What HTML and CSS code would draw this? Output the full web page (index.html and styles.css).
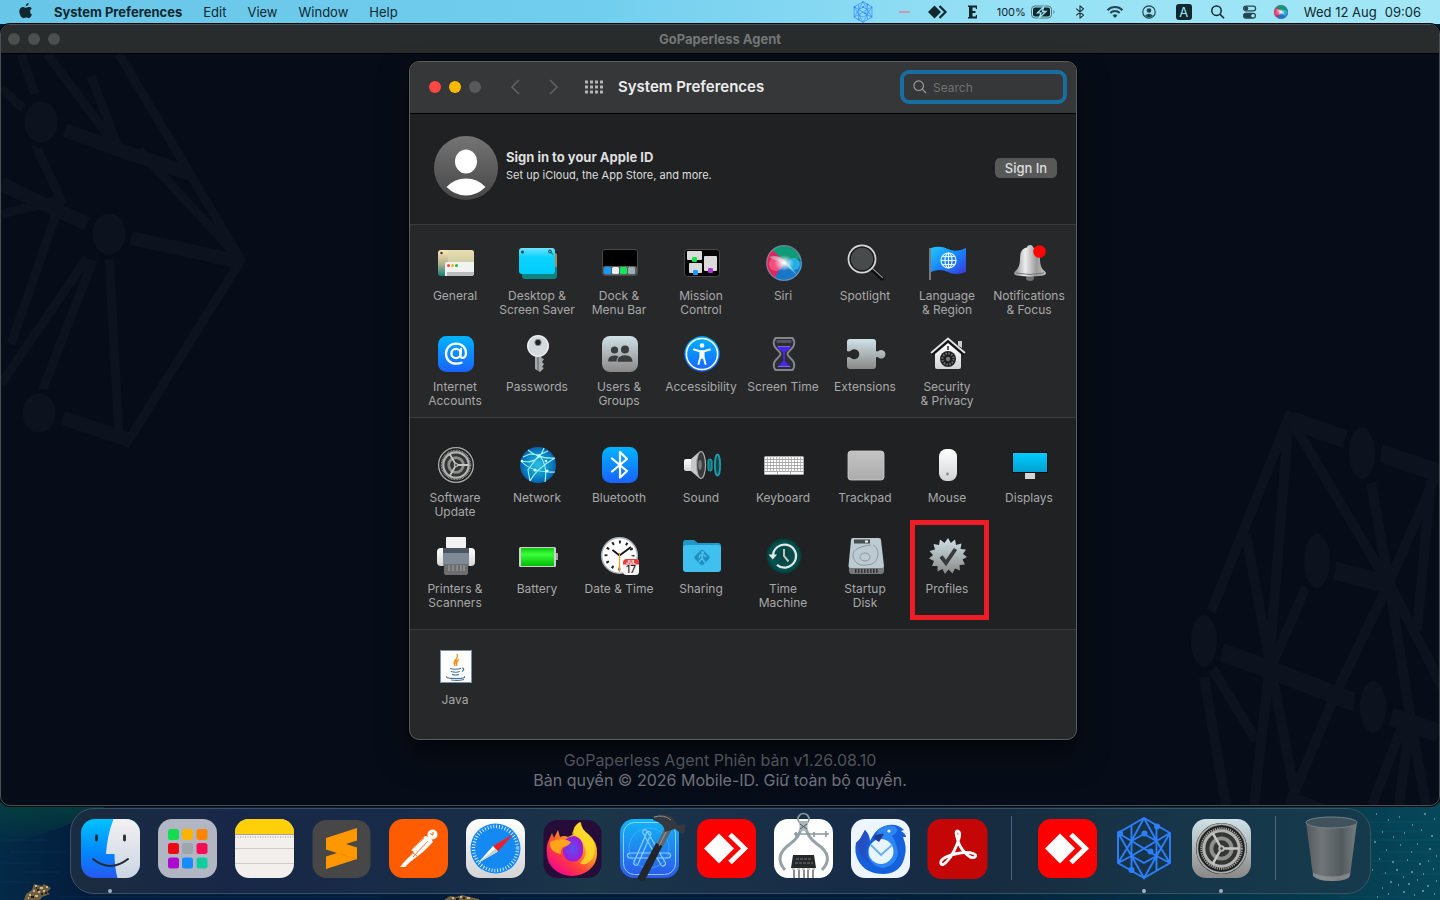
FILE: index.html
```html
<!DOCTYPE html>
<html lang="en">
<head>
<meta charset="utf-8">
<title>System Preferences</title>
<link rel="stylesheet" href="styles.css">
</head>
<body>
<svg class="defs" width="0" height="0" aria-hidden="true">
  <defs>
    <linearGradient id="gBlue" x1="0" y1="0" x2="0" y2="1"><stop offset="0" stop-color="#00b4ff"/><stop offset="1" stop-color="#1a62ff"/></linearGradient>
    <linearGradient id="gSilver" x1="0" y1="0" x2="0" y2="1"><stop offset="0" stop-color="#cfe2e8"/><stop offset="1" stop-color="#8a8886"/></linearGradient>
    <linearGradient id="gCyan" x1="0" y1="0" x2="0" y2="1"><stop offset="0" stop-color="#6fe3ff"/><stop offset=".35" stop-color="#0cd3ff"/><stop offset="1" stop-color="#00cdfc"/></linearGradient>
    <linearGradient id="gMetal" x1="0" y1="0" x2="1" y2="0"><stop offset="0" stop-color="#8c8c8c"/><stop offset=".35" stop-color="#eeeeee"/><stop offset=".7" stop-color="#9a9a9a"/><stop offset="1" stop-color="#c4c4c4"/></linearGradient>
    <linearGradient id="gWhite" x1="0" y1="0" x2="0" y2="1"><stop offset="0" stop-color="#ffffff"/><stop offset="1" stop-color="#d4d4d6"/></linearGradient>
    <linearGradient id="gAvatar" x1="0" y1="0" x2="0" y2="1"><stop offset="0" stop-color="#747474"/><stop offset="1" stop-color="#464646"/></linearGradient>
    <linearGradient id="gFlag" x1="0" y1="0" x2="1" y2="1"><stop offset="0" stop-color="#22c8ff"/><stop offset=".5" stop-color="#1686ff"/><stop offset="1" stop-color="#3a38d8"/></linearGradient>
    <linearGradient id="gSand" x1="0" y1="0" x2="0" y2="1"><stop offset="0" stop-color="#fbe9b4"/><stop offset=".5" stop-color="#b9b48e"/><stop offset="1" stop-color="#177f7c"/></linearGradient>
    <linearGradient id="gGreen" x1="0" y1="0" x2="0" y2="1"><stop offset="0" stop-color="#0fc712"/><stop offset=".35" stop-color="#3dff3a"/><stop offset="1" stop-color="#00bd06"/></linearGradient>
    <linearGradient id="gScreen" x1="0" y1="0" x2="0" y2="1"><stop offset="0" stop-color="#00ccff"/><stop offset="1" stop-color="#00a2d0"/></linearGradient>
    <linearGradient id="gPad" x1="0" y1="0" x2="0" y2="1"><stop offset="0" stop-color="#c3c3c4"/><stop offset="1" stop-color="#acacad"/></linearGradient>
    <linearGradient id="gFire" x1="1" y1="0" x2=".2" y2="1"><stop offset="0" stop-color="#fff236"/><stop offset=".4" stop-color="#ffa41c"/><stop offset=".7" stop-color="#ff3b3c"/><stop offset="1" stop-color="#f2009a"/></linearGradient>
    <linearGradient id="gBin" x1="0" y1="0" x2="1" y2="0"><stop offset="0" stop-color="#565a5e"/><stop offset=".3" stop-color="#74787b"/><stop offset=".7" stop-color="#575d60"/><stop offset="1" stop-color="#7b8184"/></linearGradient>
    <radialGradient id="gNet"><stop offset="0" stop-color="#2bbfe0"/><stop offset=".7" stop-color="#0a86c4"/><stop offset="1" stop-color="#0a5fb0"/></radialGradient>
    <radialGradient id="gPurple"><stop offset="0" stop-color="#5a50f0"/><stop offset="1" stop-color="#a018d8"/></radialGradient>
    <radialGradient id="gTime"><stop offset="0" stop-color="#0a3f3e"/><stop offset=".75" stop-color="#065451"/><stop offset="1" stop-color="#043a3a"/></radialGradient>
    <radialGradient id="gGlow"><stop offset="0" stop-color="#fff"/><stop offset=".35" stop-color="#fff" stop-opacity=".65"/><stop offset="1" stop-color="#fff" stop-opacity="0"/></radialGradient>

    <symbol id="gear" viewBox="0 0 60 60">
      <circle cx="30" cy="30" r="29" fill="#1d1e1e"/>
      <circle cx="30" cy="30" r="27.500" fill="#4b4c4b" stroke="#a9adac" stroke-width="2"/>
      <circle cx="30" cy="30" r="24" fill="none" stroke="#1c1c1c" stroke-width="4"/>
      <circle cx="30" cy="30" r="23" fill="none" stroke="#a2a3a1" stroke-width="2.400" stroke-dasharray="1.400 1.100"/>
      <circle cx="30" cy="30" r="20" fill="#343535" stroke="#b2b4b2" stroke-width="3.400"/>
      <circle cx="30" cy="30" r="11.500" fill="none" stroke="#8d8f8d" stroke-width="4.400"/>
      <path d="M30 30H50M30 30L20 12.500M30 30L20 47.500" stroke="#c5c7c5" stroke-width="2.800"/>
      <circle cx="30" cy="30" r="3.600" fill="#b4b6b4"/><circle cx="30" cy="30" r="1.400" fill="#3a3a3a"/>
    </symbol>
    <symbol id="lattice" viewBox="0 0 56 64">
      <g fill="none" stroke="currentColor" stroke-width="1.900">
        <path d="M28 2L54 17V47L28 62L2 47V17Z"/>
        <path d="M15.500 10V54M40.500 10V54M28 2L15.500 25L2 47M28 2L40.500 25L54 47M2 17L15.500 40L28 62L40.500 40L54 17M15.500 25L28 18L40.500 25L15.500 40L28 47L40.500 40L15.500 25L2 17M40.500 25L54 17M2 47L15.500 40M54 47L40.500 40"/>
      </g>
      <g fill="currentColor"><circle cx="41" cy="10.500" r="3"/><circle cx="4" cy="17.500" r="3"/><circle cx="28.500" cy="17.500" r="3"/><circle cx="34.500" cy="35.500" r="3"/><circle cx="15.500" cy="54" r="3"/></g>
    </symbol>
    <symbol id="siri" viewBox="0 0 36 36">
      <circle cx="18" cy="18" r="18" fill="#2b3f6e"/>
      <path d="M6 5A18 18 0 0 1 35 15C28 12 22 20 17 17S10 10 6 5Z" fill="#0f9a78"/>
      <path d="M6 5A18 18 0 0 0 9 33C20 28 19 20 18 17S10 8 6 5Z" fill="#d8285f"/>
      <path d="M9 33A18 18 0 0 0 36 17C28 12 22 14 18 17S12 28 9 33Z" fill="#1878c8"/>
      <ellipse cx="10" cy="19" rx="7" ry="7" fill="#ff5f8c" opacity=".7"/>
      <ellipse cx="28" cy="19" rx="6" ry="6" fill="#28c8f0" opacity=".7"/>
      <path d="M3 12C14 8 22 16 31 30L18 19Z" fill="#bfe9e6" opacity=".5"/>
      <ellipse cx="18" cy="18" rx="10" ry="8" fill="url(#gGlow)"/>
      <circle cx="18" cy="18" r="17.300" fill="none" stroke="#a8b8c0" stroke-opacity=".5" stroke-width="1.200"/>
    </symbol>
    <symbol id="bt" viewBox="0 0 10 16"><path d="M1 4.500L9 11.500L5 15V1L9 4.500L1 11.500" fill="none" stroke="currentColor" stroke-width="1.200" stroke-linejoin="round" stroke-linecap="round"/></symbol>
    <symbol id="anydesk" viewBox="0 0 64 64">
      <rect x="3" y="3" width="59" height="59" rx="13" fill="#fe0000"/>
      <path d="M25 17.500L40 32.500L25 47.500L10 32.500Z" fill="#fff"/>
      <path d="M36 18.500L50.500 32.500L36 46.500" fill="none" stroke="#fff" stroke-width="5"/>
    </symbol>
  </defs>
</svg>

<svg class="wallpaper" viewBox="0 0 1440 100" preserveAspectRatio="xMidYMax slice" aria-hidden="true">
  <defs>
    <linearGradient id="sea" x1="0" y1="0" x2="1" y2="0"><stop offset="0" stop-color="#032a47"/><stop offset=".06" stop-color="#031c3c"/><stop offset=".6" stop-color="#041c38"/><stop offset=".9" stop-color="#05384c"/><stop offset="1" stop-color="#06485a"/></linearGradient>
    <linearGradient id="shore" x1="0" y1="0" x2="0" y2="1"><stop offset="0" stop-color="#04403f"/><stop offset="1" stop-color="#04403f" stop-opacity="0"/></linearGradient>
  </defs>
  <rect width="1440" height="100" fill="url(#sea)"/>
  <path d="M0 0H120L60 28L0 48Z" fill="url(#shore)"/>
  <g stroke="#0c6478" stroke-opacity=".35"><path d="M1360 22H1440M1372 31H1425M1366 40H1440M1378 52H1432M1370 61H1440M1380 74H1440M1340 97H1410"/></g>
  <g stroke="#0b3c63" stroke-opacity=".4"><path d="M0 40H50M10 52H66M0 63H40M20 72H60M0 82H30M60 97H380M500 98H900"/></g>
  <g fill="#6f6045"><path d="M24 100L26 94L32 90L34 84L42 86L44 84L51 88L47 92L50 94L42 97L40 100Z"/><path d="M444 100L450 96L456 97L462 95L470 97L479 99V100Z"/></g>
  <path d="M35 86h2M40 88h3M46 87h2M33 91h2M38 92h2M43 91h2M29 95h2M35 96h3M28 98h1M452 98h2M460 97h2M467 98h3" stroke="#d2b77c" stroke-width="2"/>
  <path d="M37 90h2M41 94h2M31 97h3M45 93h2M36 88h1M456 99h3M463 98h2" stroke="#1c1d1c" stroke-width="2"/>
  <path d="M1376 14h1M1388 20h1M1399 17h1M1412 25h1M1424 14h2M1434 19h1M1382 32h1M1374 42h2M1393 37h1M1404 33h1M1421 30h1M1431 36h2M1386 50h1M1400 45h1M1411 52h1M1417 44h1M1429 49h2M1436 56h1M1379 59h1M1392 62h2M1407 60h1M1419 64h2M1428 61h1M1372 70h1M1385 73h1M1396 70h2M1403 77h1M1411 72h2M1423 74h1M1433 69h1M1390 82h2M1382 88h1M1398 85h1M1408 84h2M1417 80h1M1427 86h2M1436 81h1M1388 94h1M1403 92h2M1414 95h1M1422 91h2M1434 94h1M1377 97h1" stroke="#9fcdd3" stroke-width="1"/>
</svg>

<header class="menubar">
  <nav class="menus" aria-label="Application menu">
    <a class="menu-apple" href="#" aria-label="Apple"><svg width="14" height="16" viewBox="0 0 14 16"><path d="M9.700 0C9.800 1.700 8.300 3.300 6.700 3.300C6.600 1.700 8 .2 9.700 0ZM12.900 11.500C12.200 13.200 11.100 15.200 9.800 15.200C8.900 15.200 8.500 14.600 7.300 14.600S5.600 15.200 4.700 15.200C2.600 15.200 .3 11.600 .3 8.500C.3 5.600 2.100 4 4 4C5.200 4 6.200 4.800 6.900 4.800C7.600 4.800 8.700 4 10.100 4C11.200 4 12.200 4.500 12.800 5.400C10.400 6.800 10.800 10.400 12.900 11.500Z" fill="#10272e"/></svg></a>
    <a class="menu-app" href="#">System Preferences</a>
    <a href="#">Edit</a>
    <a href="#">View</a>
    <a href="#">Window</a>
    <a href="#">Help</a>
  </nav>
  <div class="status">
    <svg class="status-lattice" width="20" height="22"><use href="#lattice"/></svg>
    <svg width="23" height="16" viewBox="0 0 23 16"><path d="M10 8H21" stroke="#e77f92" stroke-width="1.500"/></svg>
    <svg width="20" height="16" viewBox="0 0 20 16"><path d="M6.500 1.500L13 8L6.500 14.500L0 8Z" fill="#10272e"/><path d="M11.500 2L17.500 8L11.500 14" fill="none" stroke="#10272e" stroke-width="2.200"/></svg>
    <svg width="17" height="16" viewBox="0 0 17 16"><path d="M4 1.500H13V5H12L11.500 3.500H8.500V7H11.500V9H8.500V12.500H11.500L12 11H13V14.500H4V13H5V3H4Z" fill="#10272e"/></svg>
    <span class="battery"><span>100%</span><svg width="25" height="14" viewBox="0 0 25 14"><rect x=".5" y="1" width="20" height="12" rx="3.500" fill="none" stroke="#4c7680"/><rect x="2" y="2.500" width="17" height="9" rx="2" fill="#10272e"/><path d="M12.500 2L6.500 7.800H10L8.500 12.500L15 6.500H11.500Z" fill="#10272e" stroke="#a0e6f5" stroke-width="1.300"/><path d="M22.500 5Q24.500 7 22.500 9Z" fill="#4c7680"/></svg></span>
    <svg class="status-ink" width="16" height="14"><use href="#bt"/></svg>
    <svg width="22" height="14" viewBox="0 0 22 14" fill="none" stroke="#23464f" stroke-width="2"><path d="M3.500 5.200A10.600 10.600 0 0 1 18.500 5.200M6.300 8A6.600 6.600 0 0 1 15.700 8"/><path d="M11 13L8.600 10.500A3.300 3.300 0 0 1 13.400 10.500Z" fill="#23464f" stroke="none"/></svg>
    <svg width="16" height="14" viewBox="0 0 16 14"><circle cx="7" cy="7" r="6.200" fill="none" stroke="#23464f" stroke-width="1.200"/><circle cx="7" cy="5.500" r="2.300" fill="#23464f"/><path d="M3 10.800Q7 6.500 11 10.800Q7 14 3 10.800Z" fill="#23464f"/></svg>
    <span class="input-source">A</span>
    <svg width="16" height="14" viewBox="0 0 16 14" fill="none" stroke="#10272e" stroke-width="1.500"><circle cx="6.500" cy="5.700" r="4.700"/><path d="M10 9.200L14 13.300"/></svg>
    <svg width="16" height="14" viewBox="0 0 16 14"><rect x="1.600" y="1.100" width="12" height="4.800" rx="2.400" fill="none" stroke="#23464f" stroke-width="1.200"/><circle cx="4.200" cy="3.500" r="2" fill="#23464f"/><rect x="1" y="7.700" width="13" height="6" rx="3" fill="#23464f"/><circle cx="11" cy="10.700" r="1.800" fill="#9fe5f4"/></svg>
    <svg width="14" height="14"><use href="#siri"/></svg>
    <time class="clock"><span>Wed 12 Aug</span><span>09:06</span></time>
  </div>
</header>

<main class="agent">
  <header class="agent-title">
    <div class="lights lights-off"><span></span><span></span><span></span></div>
    <h1>GoPaperless Agent</h1>
  </header>
  <div class="agent-body">
    <svg class="net net-left" width="260" height="460" viewBox="0 0 260 460" aria-hidden="true">
      <g stroke="#0d131e" stroke-width="9" fill="none">
        <path d="M118 0L240 206L124 392M240 206L138 96M40 340L92 206M118 384L108 200M118 96L46 0M118 96L90 22M0 34L24 56M0 330L86 204M0 160L60 146L34 90M20 0L34 40M60 146L10 290"/>
        <path d="M64 76L118 96L190 120M130 184L240 208M62 364L128 386M0 130L86 170" stroke-width="14"/>
      </g>
      <g fill="#0d131e" stroke="#070d18" stroke-width="5"><ellipse cx="40" cy="68" rx="19" ry="23"/><ellipse cx="108" cy="180" rx="19" ry="23"/><ellipse cx="38" cy="359" rx="19" ry="22"/></g>
    </svg>
    <svg class="net net-right" width="250" height="400" viewBox="1190 405 250 400" aria-hidden="true">
      <g stroke="#0d131e" stroke-width="10" fill="none">
        <path d="M1292 412L1212 612M1289 430L1270 665M1295 425L1390 585M1247 535L1272 667L1297 800M1372 483L1390 583L1413 727L1427 805M1307 587L1272 667M1390 583L1337 693L1290 805M1205 677L1227 805M1213 668L1257 740M1270 673L1255 805M1432 480L1418 630M1390 583L1445 690M1403 727L1373 805M1440 468L1390 583M1410 727L1400 805"/>
        <path d="M1292 420L1348 440M1381 453L1440 473M1334 570L1390 585M1222 652L1272 670L1357 703M1392 717L1440 733M1290 800L1340 820" stroke-width="18"/>
      </g>
      <g fill="#0d131e" stroke="#070d18" stroke-width="6"><ellipse cx="1363" cy="453" rx="16" ry="29"/><ellipse cx="1318" cy="561" rx="16" ry="30"/><ellipse cx="1205" cy="641" rx="16" ry="29"/><ellipse cx="1374" cy="707" rx="16" ry="29"/></g>
    </svg>

    <section class="prefs" aria-label="System Preferences">
      <header class="toolbar">
        <div class="lights"><span class="light-close"></span><span class="light-min"></span><span></span></div>
        <div class="nav">
          <button type="button" aria-label="Back"><svg width="20" height="20" viewBox="0 0 20 20"><path d="M13 3L6 10L13 17"/></svg></button>
          <button type="button" aria-label="Forward"><svg width="20" height="20" viewBox="0 0 20 20"><path d="M6 3L13 10L6 17"/></svg></button>
        </div>
        <button class="show-all" type="button" aria-label="Show all"><svg width="20" height="14" viewBox="0 0 20 14"><path d="M1 2H20M1 7H20M1 12H20" stroke="#b4b5b6" stroke-width="3" stroke-dasharray="3 2"/></svg></button>
        <h2>System Preferences</h2>
        <label class="search">
          <svg width="14" height="14" viewBox="0 0 14 14" fill="none" stroke="#9c9d9e" stroke-width="1.200"><circle cx="5.700" cy="5.700" r="4.800"/><path d="M9.200 9.200L13 13"/></svg>
          <input type="text" placeholder="Search" aria-label="Search">
        </label>
      </header>

      <div class="account">
        <svg width="64" height="64" viewBox="0 0 64 64"><circle cx="32" cy="32" r="32" fill="url(#gAvatar)"/><ellipse cx="32" cy="25.500" rx="11" ry="12" fill="#fff"/><path d="M12.500 51Q20 42.500 32 42.500T51.500 51Q43 59.500 32 59.500T12.500 51Z" fill="#fff"/></svg>
        <div class="account-text"><h3>Sign in to your Apple ID</h3><p>Set up iCloud, the App Store, and more.</p></div>
        <button class="sign-in" type="button">Sign In</button>
      </div>

      <div class="group group-personal">
        <button class="pref" type="button"><svg width="40" height="40" viewBox="0 0 40 40"><rect x="2" y="7" width="36" height="26" rx="3" fill="url(#gSand)"/><path d="M12 7H35a3 3 0 0 1 3 3V21H12Z" fill="#dcd9ae" opacity=".7"/><path d="M9 21a2 2 0 0 1 2-2H38V30a3 3 0 0 1-3 3H9Z" fill="#f2f2f2"/><path d="M11 29H38v1a3 3 0 0 1-3 3H11Z" fill="#bdbdbd"/><circle cx="12.500" cy="22.500" r="1.500" fill="#ff4545"/><circle cx="16.500" cy="22.500" r="1.500" fill="#ffb400"/><circle cx="20.500" cy="22.500" r="1.500" fill="#12c23a"/><circle cx="5.500" cy="10" r="1.200" fill="#333"/></svg><span>General</span></button>
        <button class="pref" type="button"><svg width="40" height="40" viewBox="0 0 40 40"><rect x="4" y="10" width="35" height="26" rx="3" fill="#0b8580"/><path d="M37 10a2 2 0 0 1 2 2V24H37Z" fill="#a88a55"/><rect x="1" y="5" width="36" height="26" rx="3" fill="url(#gCyan)"/><ellipse cx="4.500" cy="9" rx="1.300" ry="1.600" fill="#10343c"/><circle cx="32" cy="8.500" r="1.400" fill="none" stroke="#10343c"/><path d="M33 9.500L35 11.500" stroke="#10343c"/></svg><span>Desktop &amp;<br>Screen Saver</span></button>
        <button class="pref" type="button"><svg width="40" height="40" viewBox="0 0 40 40"><rect x="2.500" y="6.500" width="35" height="26" rx="2.500" fill="#000" stroke="#4a4a4a"/><rect x="3" y="23" width="34" height="9" rx="2" fill="#5b5f61"/><rect x="4" y="24" width="7" height="7" rx="1.500" fill="#139dff"/><rect x="12" y="24" width="7" height="7" rx="1.500" fill="#ececec"/><rect x="20" y="24" width="7" height="7" rx="1.500" fill="#10e858"/><rect x="28" y="24" width="7" height="7" rx="1.500" fill="#9bb0b6"/></svg><span>Dock &amp;<br>Menu Bar</span></button>
        <button class="pref" type="button"><svg width="40" height="40" viewBox="0 0 40 40"><rect x="2.500" y="6.500" width="35" height="27" rx="3" fill="#050505" stroke="#4a4a4a"/><g fill="#dadada"><rect x="5" y="8" width="15" height="9" rx="1"/><rect x="22" y="13" width="13" height="15" rx="1"/><rect x="7" y="20" width="13" height="10" rx="1"/></g><rect x="10" y="14" width="5" height="5" rx="1.200" fill="#0ce84c"/><rect x="11" y="27" width="5" height="5" rx="1.200" fill="#199cff"/><rect x="26" y="25" width="5" height="5" rx="1.200" fill="#b03ad4"/></svg><span>Mission<br>Control</span></button>
        <button class="pref" type="button"><svg width="40" height="40" viewBox="0 0 40 40"><use href="#siri" x="2" y="2" width="36" height="36"/></svg><span>Siri</span></button>
        <button class="pref" type="button"><svg width="40" height="40" viewBox="0 0 40 40"><path d="M27 27L36 35.500" stroke="#0c0c0c" stroke-width="4" stroke-linecap="round"/><path d="M26.500 25.500L37 35" stroke="#8a8a8a" stroke-width="1.200"/><circle cx="16" cy="16" r="13.500" fill="#3a3d3e" stroke="#d6d6d6" stroke-width="1.800"/><circle cx="16" cy="16" r="11.800" fill="#474b4c" stroke="#191919" stroke-width="1.200"/></svg><span>Spotlight</span></button>
        <button class="pref" type="button"><svg width="40" height="40" viewBox="0 0 40 40"><path d="M2 5V37" stroke="#8e9090" stroke-width="1.600"/><path d="M3 5Q12 2 20 6T38 5V29Q28 33 20 29T3 29Z" fill="url(#gFlag)"/><g fill="none" stroke="#e9f6ff" stroke-width="1.200"><circle cx="20.500" cy="17.500" r="7.500"/><ellipse cx="20.500" cy="17.500" rx="3.500" ry="7.500"/><path d="M20.500 10V25M13 17.500H28M14.500 13.500H26.500M14.500 21.500H26.500"/></g></svg><span>Language<br>&amp; Region</span></button>
        <button class="pref" type="button"><svg width="40" height="40" viewBox="0 0 40 40"><ellipse cx="20" cy="35" rx="4" ry="3" fill="#6f7171"/><circle cx="20" cy="5" r="3" fill="#c9c9c9"/><path d="M20 4C12 4 10 9 10 16S8 26 4.500 29Q3 32 7 32.500Q20 34.500 33 32.500Q37 32 35.500 29C32 26 30 23 30 16S28 4 20 4Z" fill="url(#gMetal)"/><path d="M6 30Q20 33 34 30" fill="none" stroke="#777"/><circle cx="29.500" cy="8.500" r="6.300" fill="#fd0500"/></svg><span>Notifications<br>&amp; Focus</span></button>

        <button class="pref" type="button"><svg width="40" height="40" viewBox="0 0 40 40"><rect x="2" y="2" width="36" height="36" rx="8.500" fill="url(#gBlue)"/><g fill="none" stroke="#fff" stroke-width="2.300" stroke-linecap="round"><circle cx="20" cy="19.500" r="4.600"/><path d="M25 14.800L24.200 21.500C24 25 29.800 24.800 30 19.300C30.200 13.500 25.800 9.700 20.200 9.700C14.300 9.700 10 13.800 10 19.800C10 26 14.500 29.700 20.500 29.700Q23.300 29.700 25.500 28.800"/></g></svg><span>Internet<br>Accounts</span></button>
        <button class="pref" type="button"><svg width="40" height="40" viewBox="0 0 40 40"><path d="M17 20H23.500V24L26 25L24 28L26 30L24 33L26 34L22 38L17 35Z" fill="#a5aaac"/><path d="M20 21V37" stroke="#555b5e"/><circle cx="20" cy="12" r="11" fill="#d3d9dc"/><circle cx="20" cy="12" r="10.200" fill="none" stroke="#f3f3f3"/><circle cx="20" cy="8.500" r="3.200" fill="#1f2123" stroke="#8c9193"/></svg><span>Passwords</span></button>
        <button class="pref" type="button"><svg width="40" height="40" viewBox="0 0 40 40"><rect x="2" y="2" width="36" height="36" rx="8" fill="url(#gSilver)"/><g fill="#3b3c3d"><circle cx="14.500" cy="16" r="3.600"/><path d="M8 27.500Q8 21.500 14.500 21.500Q17 21.500 18.500 22.800Q16.500 24.500 16.500 27.500Z"/><circle cx="25" cy="15.500" r="4"/><path d="M17.500 27.800Q17.500 21.200 25 21.200T32.500 27.800Z"/></g></svg><span>Users &amp;<br>Groups</span></button>
        <button class="pref" type="button"><svg width="40" height="40" viewBox="0 0 40 40"><circle cx="20" cy="20" r="17.700" fill="url(#gBlue)"/><circle cx="20" cy="20" r="15.600" fill="none" stroke="#fff" stroke-width="1.500"/><circle cx="20" cy="11.500" r="2.300" fill="#fff"/><path d="M12 15.500L18 17.200H22L28 15.500M20 17V24M18.400 17.200V23L16.500 30M21.600 17.200V23L23.500 30" fill="none" stroke="#fff" stroke-width="1.900" stroke-linecap="round"/></svg><span>Accessibility</span></button>
        <button class="pref" type="button"><svg width="40" height="40" viewBox="0 0 40 40"><path d="M11.500 4H28.500Q31 7 30 11C29 15 23.500 17 23.500 20S29 25 30 29Q31 33 28.500 36H11.500Q9 33 10 29C11 25 16.500 23 16.500 20S11 15 10 11Q9 7 11.500 4Z" fill="#2c2c33" stroke="#85848e" stroke-width="2"/><path d="M12.500 6H27.500V9H12.500Z" fill="#54545e"/><path d="M13 12H27Q26 15 21 18.500V27L27 33H13L19 27V18.500Q14 15 13 12Z" fill="#4a28e0"/><path d="M14 12.500H26M14 32.500H26" stroke="#7a63f5"/></svg><span>Screen Time</span></button>
        <button class="pref" type="button"><svg width="40" height="40" viewBox="0 0 40 40"><path d="M4 5H27a3 3 0 0 1 3 3V17Q31.500 18 33 16.500A4.300 4.300 0 1 1 33 24Q31.500 22.500 30 23.500V32a3 3 0 0 1-3 3H4a3 3 0 0 1-3-3V23.500Q3 22.500 5 24A5 5 0 1 0 5 16.500Q3 18 1 17V8a3 3 0 0 1 3-3Z" fill="url(#gSilver)"/></svg><span>Extensions</span></button>
        <button class="pref" type="button"><svg width="40" height="40" viewBox="0 0 40 40"><path d="M30 7H34V14L30 12Z" fill="#c9cdce"/><path d="M7 20L20 9L33 20V33a2 2 0 0 1-2 2H9a2 2 0 0 1-2-2Z" fill="url(#gWhite)"/><path d="M3 20L20 5.500L37 20" fill="none" stroke="#111" stroke-width="4"/><path d="M3 19L20 4.500L37 19" fill="none" stroke="#dfe3e4" stroke-width="2"/><path d="M20 12V16" stroke="#333" stroke-width="1.600"/><circle cx="20" cy="25" r="8" fill="#1f2021"/><circle cx="20" cy="25" r="5.600" fill="none" stroke="#6e6e6e" stroke-width="2" stroke-dasharray="1.500 1.400"/><circle cx="20" cy="25" r="2.200" fill="#777"/></svg><span>Security<br>&amp; Privacy</span></button>
      </div>

      <div class="group group-hardware">
        <button class="pref" type="button"><svg width="40" height="40" viewBox="0 0 40 40"><use href="#gear" x="1" y="1" width="38" height="38"/></svg><span>Software<br>Update</span></button>
        <button class="pref" type="button"><svg width="40" height="40" viewBox="0 0 40 40"><circle cx="20" cy="20" r="18" fill="url(#gNet)"/><g fill="none" stroke="#9ff4f6" stroke-width="1.100"><path d="M10 5Q20 14 37 13M3 16Q20 20 26 3M3 16Q14 28 37 27M12 36Q18 24 37 13M27 37Q30 20 21 10M5 12L12 9L21 10L30 6M12 36L10 25L21 10"/></g><g fill="#d8ffff"><circle cx="21" cy="11" r="1.500"/><circle cx="17" cy="25" r="1.500"/><circle cx="29" cy="26" r="1.500"/><circle cx="28" cy="16" r="1.300"/><circle cx="4" cy="16" r="1.300"/></g></svg><span>Network</span></button>
        <button class="pref" type="button"><svg width="40" height="40" viewBox="0 0 40 40"><rect x="2" y="2" width="36" height="36" rx="8.500" fill="url(#gBlue)"/><path d="M12 13.500L27 26L20 32.500V7L27 14L12 26.500" fill="none" stroke="#fff" stroke-width="2.200" stroke-linecap="round" stroke-linejoin="round"/></svg><span>Bluetooth</span></button>
        <button class="pref" type="button"><svg width="40" height="40" viewBox="0 0 40 40"><rect x="2" y="14" width="9" height="12" rx="2" fill="url(#gWhite)"/><path d="M9 14L17 7H20V33H17L9 26Z" fill="#c7c9c9"/><ellipse cx="19" cy="20" rx="4.500" ry="13.500" fill="#383a3b" stroke="#a9abab" stroke-width="1.200"/><ellipse cx="18" cy="20" rx="1.800" ry="5" fill="#77797a"/><rect x="26" y="14" width="4" height="12" rx="2" fill="#12767f" stroke="#28a7b3"/><ellipse cx="35.500" cy="20" rx="2.600" ry="10.500" fill="#15454d" stroke="#1f9dab" stroke-width="1.800"/></svg><span>Sound</span></button>
        <button class="pref" type="button"><svg width="40" height="40" viewBox="0 0 40 40"><rect x="0" y="11" width="40" height="19" rx="1.500" fill="#a9a9a9"/><path d="M1 13H39M1 16H39M1 19H39M1 22H39M1 25H39" stroke="#fff" stroke-width="2.200" stroke-dasharray="2.200 .8"/><path d="M1 28H13M14 28H26M27 28H39" stroke="#fafafa" stroke-width="2.200"/></svg><span>Keyboard</span></button>
        <button class="pref" type="button"><svg width="40" height="40" viewBox="0 0 40 40"><rect x="2" y="6" width="36" height="29" rx="3" fill="url(#gPad)" stroke="#d0d0d0" stroke-width=".8"/></svg><span>Trackpad</span></button>
        <button class="pref" type="button"><svg width="40" height="40" viewBox="0 0 40 40"><rect x="11" y="4" width="18" height="32" rx="7.500" fill="url(#gWhite)"/><circle cx="19.500" cy="29" r="1.400" fill="#8c8c8c"/></svg><span>Mouse</span></button>
        <button class="pref" type="button"><svg width="40" height="40" viewBox="0 0 40 40"><rect x="15" y="27" width="10" height="7" fill="#d5d5d5"/><rect x="2" y="7" width="36" height="21" fill="#0a0c0d"/><rect x="3" y="8" width="34" height="19" fill="url(#gScreen)"/></svg><span>Displays</span></button>

        <button class="pref" type="button"><svg width="40" height="40" viewBox="0 0 40 40"><rect x="1" y="12" width="38" height="18" rx="4" fill="url(#gWhite)"/><rect x="7" y="12" width="26" height="18" fill="#7d8b97"/><path d="M7 12H33V17H7Z" fill="#4c5660"/><rect x="10" y="1" width="20" height="11" rx="1" fill="#f2f2f2"/><path d="M8 28H32V37a2 2 0 0 1-2 2H10a2 2 0 0 1-2-2Z" fill="#6c6e70"/><path d="M13 29V35M17 29V35M21 29V35M25 29V35M28 29V35" stroke="#a0a2a4"/></svg><span>Printers &amp;<br>Scanners</span></button>
        <button class="pref" type="button"><svg width="40" height="40" viewBox="0 0 40 40"><rect x="1" y="11" width="37" height="20" rx="1.500" fill="#cfcfcf"/><rect x="3" y="12" width="33" height="18" fill="url(#gGreen)"/><rect x="38" y="17" width="2" height="7" fill="#a7a7a7"/></svg><span>Battery</span></button>
        <button class="pref" type="button"><svg width="40" height="40" viewBox="0 0 40 40"><circle cx="19.500" cy="19.500" r="17.800" fill="#fff" stroke="#a8b4ba" stroke-width="1.500"/><circle cx="19.500" cy="19.500" r="13.500" fill="none" stroke="#222" stroke-width="3" stroke-dasharray="2 5.070" stroke-dashoffset="1"/><path d="M19.500 19.500L12.500 14M19.500 19.500L31 11" stroke="#111" stroke-width="1.700"/><path d="M19.500 17V36" stroke="#f29a1c" stroke-width="1.200"/><rect x="23" y="23" width="16" height="16" rx="3.500" fill="#f7f5f5"/><path d="M23 28.500V26.500a3.500 3.500 0 0 1 3.500-3.500H35.500a3.500 3.500 0 0 1 3.500 3.500V28.500Z" fill="#ea3b3b"/><text class="cal-month" x="31" y="27.500">JUL</text><text class="cal-day" x="31" y="37">17</text></svg><span>Date &amp; Time</span></button>
        <button class="pref" type="button"><svg width="40" height="40" viewBox="0 0 40 40"><path d="M1 7a3 3 0 0 1 3-3H12L16 7H36a3 3 0 0 1 3 3V20H1Z" fill="#2297c6"/><rect x="1" y="9" width="38" height="27" rx="3" fill="#3fc0ee"/><rect x="14" y="15.500" width="12" height="12" rx="2" fill="#1d8fc0" transform="rotate(45 20 21.500)"/><circle cx="20.500" cy="16.500" r="1.500" fill="#4cc4ee"/><path d="M17 22L18 19H22L24 21M20 19L20.500 23L23 26.500M20 22L17 26" fill="none" stroke="#4cc4ee" stroke-width="1.500"/></svg><span>Sharing</span></button>
        <button class="pref" type="button"><svg width="40" height="40" viewBox="0 0 40 40"><circle cx="20" cy="20" r="17.500" fill="url(#gTime)"/><path d="M9 20A11.500 11.500 0 1 1 13 28.800" fill="none" stroke="#e2e9e8" stroke-width="2.200"/><path d="M4.500 18.500H13L8.800 23.500Z" fill="#e2e9e8"/><path d="M20 13V20L24.500 25.500" fill="none" stroke="#b6c8c6" stroke-width="2"/></svg><span>Time<br>Machine</span></button>
        <button class="pref" type="button"><svg width="40" height="40" viewBox="0 0 40 40"><path d="M3 31H38V35a3 3 0 0 1-3 3H6a3 3 0 0 1-3-3Z" fill="#77797a"/><path d="M9 35H32" stroke="#333" stroke-width="4" stroke-dasharray="1.500 1.500"/><path d="M7 2H33a2 2 0 0 1 2 2L38 30a2 2 0 0 1-2 2H4.500a2 2 0 0 1-2-2L5 4a2 2 0 0 1 2-2Z" fill="#bccad1"/><g fill="none" stroke="#8b979d"><path d="M27 9C34 12 34 26 24 28.500S8 27 7 20S16 10 25 9"/><ellipse cx="19" cy="21" rx="5" ry="4"/></g><rect x="8" y="3.500" width="16" height="4" fill="#454c50"/><rect x="19" y="4.500" width="3" height="2" fill="#f3f3f3"/></svg><span>Startup<br>Disk</span></button>
        <button class="pref pref-marked" type="button"><svg width="40" height="40" viewBox="0 0 40 40"><path d="M20 2L22.800 7L27 3.500L28 9L33.500 7.500L32.500 13L38 13.500L35 18L39 21L34.500 23.500L37 28.500L31.500 29L32 34.500L27 32.500L24.500 37.500L20.500 33.500L17 38L14.500 33L9.500 35.500L9.500 30L4 30L6 25L1 22.500L5 19L1.500 15L7 13.500L5.500 8L11 9L12 3.500L16.500 7Z" fill="url(#gSilver)"/><path d="M13 20.500L18 27L27.500 13" fill="none" stroke="#383a3b" stroke-width="3.800"/></svg><span>Profiles</span></button>
      </div>

      <div class="group group-other">
        <button class="pref" type="button"><svg width="40" height="40" viewBox="0 0 40 40"><rect x="4.500" y="3.500" width="31" height="32" fill="#fff" stroke="#7591ab"/><path d="M21 7C24 11 15 13 19 19C18 15 22 14 21 7ZM23 12Q18 15 21 19Q20 16 23 12Z" fill="#ee8a16" stroke="#ee8a16" stroke-width=".8"/><path d="M14 21.500Q19 23 25 21.500M15 24.500Q20 26 24 24.500M26 21Q29.500 21.500 26 24.500M16 27.500Q20 28.500 23 27.500M11 29.500Q9 31.500 20 31.500T28 29.500M15 33Q22 34 28 32.500" fill="none" stroke="#45729b" stroke-width="1.200"/></svg><span>Java</span></button>
      </div>
    </section>

    <footer class="agent-footer">
      <p>GoPaperless Agent Phiên bản v1.26.08.10</p>
      <p class="copyright">Bản quyền © 2026 Mobile-ID. Giữ toàn bộ quyền.</p>
    </footer>
  </div>
</main>

<nav class="dock" aria-label="Dock">
  <a class="app running" href="#" aria-label="Finder"><svg width="64" height="64" viewBox="0 0 64 64"><defs><clipPath id="tile"><rect x="3" y="3" width="59" height="59" rx="14"/></clipPath><linearGradient id="fA" x1="0" y1="0" x2="0" y2="1"><stop offset="0" stop-color="#00c8ff"/><stop offset=".55" stop-color="#0089ff"/><stop offset="1" stop-color="#2a55f0"/></linearGradient><linearGradient id="fB" x1="0" y1="0" x2="0" y2="1"><stop offset="0" stop-color="#f2f0f2"/><stop offset="1" stop-color="#c9d5e2"/></linearGradient></defs><g clip-path="url(#tile)"><rect width="64" height="64" fill="url(#fA)"/><path d="M35.500 3Q29 20 28 38H36.500Q36.500 52 40 64H64V3Z" fill="url(#fB)"/></g><path d="M18.500 20V24M46.500 20V24" stroke="#232b31" stroke-width="2.800" stroke-linecap="round"/><path d="M15 43Q32 57 50 43" fill="none" stroke="#222b33" stroke-width="2" stroke-linecap="round"/></svg></a>
  <a class="app" href="#" aria-label="Launchpad"><svg width="64" height="64" viewBox="0 0 64 64"><rect x="3" y="3" width="59" height="59" rx="14" fill="#b1b6c2"/><g><rect x="13" y="13" width="11" height="11" rx="2.500" fill="#13dd4e"/><rect x="27" y="13" width="11" height="11" rx="2.500" fill="#fdb400"/><rect x="41.500" y="13" width="11" height="11" rx="2.500" fill="#ff8500"/><rect x="13" y="27" width="11" height="11" rx="2.500" fill="#ee0714"/><rect x="27" y="27" width="11" height="11" rx="2.500" fill="#9ba5aa"/><rect x="41.500" y="27" width="11" height="11" rx="2.500" fill="#fa0c55"/><rect x="13" y="41.500" width="11" height="11" rx="2.500" fill="#ae0bd0"/><rect x="27" y="41.500" width="11" height="11" rx="2.500" fill="#158dff"/><rect x="41.500" y="41.500" width="11" height="11" rx="2.500" fill="#10cda0"/></g></svg></a>
  <a class="app" href="#" aria-label="Notes"><svg width="64" height="64" viewBox="0 0 64 64"><g clip-path="url(#tile)"><rect width="64" height="64" fill="#f2efed"/><rect width="64" height="18" fill="#ffd009"/><path d="M3 18.500H62" stroke="#a8a08c"/><path d="M3 21H62" stroke="#c9c6c3" stroke-width="2" stroke-dasharray="1 1.500"/><path d="M3 32.500H62M3 47.500H62" stroke="#cfccca"/></g></svg></a>
  <a class="app" href="#" aria-label="Sublime Text"><svg width="64" height="64" viewBox="0 0 64 64"><rect x="3.500" y="4" width="58" height="58" rx="14" fill="#474747"/><path d="M17 22L48 12V24.500L37 28L48 31.500V43L17 53V40.500L28 37L17 33.500Z" fill="#ff9800"/><path d="M28 37L48 43V43.500L33 39Z" fill="#d97b00"/></svg></a>
  <a class="app" href="#" aria-label="Postman"><svg width="64" height="64" viewBox="0 0 64 64"><rect x="3" y="3" width="59" height="59" rx="14" fill="#ff5b00"/><circle cx="46.500" cy="18.500" r="5" fill="#fff"/><path d="M39 20Q45 20 47 26L37 36L24 46L19 51L14 51L18 46L28 36L25 34Z" fill="#fff"/><path d="M23 36L38 22M27 41L42 25M26 36L31 40" stroke="#ff5b00" stroke-width=".8" fill="none"/><path d="M47 16V19L44 17.500" stroke="#ff5b00" fill="none"/></svg></a>
  <a class="app" href="#" aria-label="Safari"><svg width="64" height="64" viewBox="0 0 64 64"><rect x="3" y="3" width="59" height="59" rx="14" fill="url(#gWhite)"/><circle cx="32.500" cy="32.500" r="25" fill="#1589f2"/><circle cx="32.500" cy="32.500" r="22" fill="none" stroke="#e3f1fd" stroke-width="3.500" stroke-dasharray=".9 1.980"/><path d="M50.500 18L35 35.500L30 30Z" fill="#ef1f28"/><path d="M15 47L30 30L35 35.500Z" fill="#fff"/><path d="M15 47L32.500 32.700L35 35.500Z" fill="#c9ced2"/></svg></a>
  <a class="app" href="#" aria-label="Firefox"><svg width="64" height="64" viewBox="0 0 64 64"><rect x="3.500" y="4" width="58" height="58" rx="14" fill="#250c39"/><path d="M8 26L12 17L14 22L18 14L20 21Q24 19 28 21L34 18Q32 10 40 6Q41 13 48 18Q58 26 57 38A25 22 0 0 1 7 38Q6 31 8 26Z" fill="url(#gFire)"/><path d="M32 18Q34 10 41 6Q41 13 49 19Q58 29 53 42Q46 51 40 47Q49 39 44 29Q39 21 32 18Z" fill="#ffdf2c" opacity=".8"/><path d="M22 29Q23 22 34 20Q44 22 43 35A10 10 0 1 1 23 36Q22 32 26 30Z" fill="url(#gPurple)"/><path d="M10 26Q22 20 31 26Q29 30 23 31Q20 34 21 38Q9 36 10 26Z" fill="#ffa41a"/></svg></a>
  <a class="app" href="#" aria-label="Xcode"><svg width="64" height="64" viewBox="0 0 64 64"><defs><linearGradient id="xc" x1="0" y1="0" x2="0" y2="1"><stop offset="0" stop-color="#10b6f7"/><stop offset="1" stop-color="#2c58e9"/></linearGradient></defs><rect x="3" y="3" width="59" height="59" rx="14" fill="url(#xc)"/><rect x="6.500" y="6.500" width="52" height="52" rx="11" fill="none" stroke="#9ad4ff" stroke-width=".9"/><circle cx="32" cy="32" r="20" fill="none" stroke="#58b8fa" stroke-opacity=".6"/><g fill="none" stroke="#8bd0ff" stroke-width="1.200"><path d="M17 46L30 16A2.500 2.500 0 0 1 34 18L21 48A2 2 0 0 1 17 46ZM26 17L44 49A2 2 0 0 0 48 46L30 15A2 2 0 0 0 26 17ZM13 37H51A2.500 2.500 0 0 1 51 42H13A2.500 2.500 0 0 1 13 37Z"/></g><path d="M49 10L55 13L45 32L39 29Z" fill="#5f646a"/><path d="M39 27L45.500 30L28 64Q24 67 20.500 62Z" fill="#22262b"/><path d="M51 12L42 30" stroke="#a4aab0" stroke-width=".8"/><path d="M36 1Q44-4 54 0L61 9L68 8V15L65 18L58 13L48 16Q47 7 36 4Z" fill="#343840"/><path d="M37 1Q47-2 54 4" stroke="#8a919b" fill="none"/></svg></a>
  <a class="app" href="#" aria-label="AnyDesk"><svg width="64" height="64"><use href="#anydesk"/></svg></a>
  <a class="app" href="#" aria-label="System Information"><svg width="64" height="64" viewBox="0 0 64 64"><rect x="3" y="3" width="59" height="59" rx="14" fill="#fff"/><circle cx="32.500" cy="3" r="5.500" fill="none" stroke="#8d999c" stroke-width="1.700"/><g fill="none" stroke="#93a3a7" stroke-width="3"><path d="M31 9Q29 21 19 28Q2 40 14 54M34 9Q36 21 46 28Q64 40 51 54"/></g><path d="M23 18H58M25 16V21M43 16V21M55 15V21" stroke="#8a999e" stroke-width="1.600"/><path d="M28 5H37L36 15H29Z" fill="#aab6b9"/><path d="M29 8L36 13M36 8L29 13" stroke="#4c5659"/><path d="M22 39H43L45 52H20Z" fill="#26282a"/><path d="M25 43H41M24 47H42" stroke="#737679" stroke-dasharray="3 1"/><path d="M23 54V62M28 54V62M33 54V62M37 54V62M42 54V62" stroke="#8e8e8e" stroke-width="2"/><path d="M21 53H44" stroke="#c5c5c5" stroke-width="2" stroke-dasharray="3 2"/></svg></a>
  <a class="app" href="#" aria-label="Thunderbird"><svg width="64" height="64" viewBox="0 0 64 64"><rect x="3" y="3" width="59" height="59" rx="14" fill="#edf5ff"/><path d="M8 27L12 23L17 14Q22 19 22 25Q29 10 41 9Q50 8 56 14L53 15Q58 18 58 21L55 21Q59 31 57 39Q54 57 36 58Q17 58 10 44Q6 36 8 27Z" fill="#1460dd"/><path d="M8 27L12 23L17 14Q21 19 20 27Q15 36 22 47Q11 43 8 27Z" fill="#2450c4"/><path d="M30 14Q36 8 46 10Q53 15 44 20Q48 25 50 37Q48 50 35 52Q24 51 20 40Q22 29 27 25Z" fill="#2c86f4"/><circle cx="33" cy="35.500" r="12.500" fill="#e8f4ff"/><path d="M23 29L33 39L44 29" fill="none" stroke="#62b1f6" stroke-width="1.800"/><circle cx="41" cy="15" r="1.600" fill="#fff"/><path d="M25 22Q29 17 36 18L31 26Z" fill="#203b94"/></svg></a>
  <a class="app" href="#" aria-label="Adobe Acrobat"><svg width="64" height="64" viewBox="0 0 64 64"><rect x="2.500" y="3" width="60" height="60" rx="14" fill="#c40606"/><path d="M16 48C13 43 26 38 35 37C47 35 53 39 50 41C46 44 36 35 33 25C31 18 30 15 33 15C37 16 33 27 29 35C25 43 18 51 16 48Z" fill="none" stroke="#fff" stroke-width="2.800" stroke-linejoin="round"/></svg></a>
  <span class="divider"></span>
  <a class="app" href="#" aria-label="AnyDesk window"><svg width="64" height="64"><use href="#anydesk"/></svg></a>
  <a class="app running app-lattice" href="#" aria-label="GoPaperless Agent"><svg width="64" height="64"><use href="#lattice"/></svg></a>
  <a class="app running" href="#" aria-label="System Preferences"><svg width="64" height="64" viewBox="0 0 64 64"><rect x="3" y="3" width="59" height="59" rx="14" fill="url(#gSilver)"/><use href="#gear" x="6" y="6" width="53" height="53"/></svg></a>
  <span class="divider"></span>
  <a class="app" href="#" aria-label="Trash"><svg width="64" height="64" viewBox="0 0 64 64"><path d="M7 6L14 60Q17 65 33 65T51 60L58 6Z" fill="url(#gBin)" opacity=".95"/><path d="M14 57Q33 64 51 57L50 61Q46 65 33 65T14 60Z" fill="#a3a8aa" opacity=".5"/><ellipse cx="32.500" cy="6.500" rx="25.500" ry="5.500" fill="#40525c" stroke="#73828a"/></svg></a>
</nav>
</body>
</html>
```
FILE: styles.css
```css
* { box-sizing: border-box; }

body {
  position: relative;
  display: flex;
  flex-direction: column;
  min-height: 100vh;
  margin: 0;
  overflow-x: hidden;
  background: #031c38;
  font: 13px/16px Inter, "Noto Sans", sans-serif;
  color: #dedfdf;
}

h1, h2, h3, p { margin: 0; }
svg { display: block; flex: none; }
a { color: inherit; text-decoration: none; }
button { padding: 0; border: 0; background: none; color: inherit; font: inherit; }

.defs { position: absolute; }
.wallpaper { position: absolute; left: 0; bottom: 0; width: 100%; height: 100px; }

/* Menu bar */
.menubar {
  position: relative;
  display: flex;
  justify-content: space-between;
  align-items: center;
  height: 24px;
  padding: 0 19px;
  background: linear-gradient(90deg, #68c6e8, #70cdee 40%, #96e1f5 70%, #a3e7f6);
  color: #10272e;
}
.menus { display: flex; align-items: center; gap: 21px; }
.menu-apple { margin-bottom: 2px; }
.menu-app { font-weight: 700; }
.status { display: flex; align-items: center; gap: 16px; }
.status-lattice { color: #2e86ff; }
.status-ink { color: #10272e; }
.battery { display: flex; align-items: center; gap: 5px; font-size: 11px; }
.input-source {
  width: 16px;
  margin: 0 2px;
  border-radius: 3px;
  background: #10272e;
  color: #a0e6f5;
  text-align: center;
}
.clock { display: flex; gap: 8px; }

/* Agent window */
.agent {
  position: relative;
  flex: 1;
  display: flex;
  flex-direction: column;
  border: 1px solid #4a5052;
  border-radius: 10px;
  overflow: hidden;
  background: #070d18;
  box-shadow: 0 0 0 1px #05090d;
}
.agent-title {
  display: grid;
  grid-template-columns: 1fr auto 1fr;
  align-items: center;
  height: 29px;
  padding: 0 7px;
  border-bottom: 1px solid #000;
  background: #292c2d;
}
.agent-title h1 { font-size: 13px; line-height: 16px; color: #747777; }
.lights { display: flex; gap: 8px; }
.lights span { width: 12px; height: 12px; border-radius: 50%; background: #58595a; }
.lights .light-close { background: #ff4743; }
.lights .light-min { background: #fdb900; }
.lights-off span { background: #4b4f50; }
.agent-body {
  position: relative;
  flex: 1;
  display: flex;
  flex-direction: column;
  align-items: center;
  padding: 7px 0 15px;
}
.net { position: absolute; }
.net-left { left: 0; top: 0; }
.net-right { right: 0; bottom: 0; }

/* System Preferences */
.prefs {
  position: relative;
  width: 100%;
  max-width: 668px;
  margin-left: 46px;
  overflow: hidden;
  border: 1px solid #5c5e5e;
  border-radius: 10px;
  background: #27282a;
  box-shadow: 0 0 0 1px #020407, 0 16px 30px rgba(0, 0, 0, .5);
}
.toolbar {
  display: flex;
  align-items: center;
  height: 52px;
  padding: 0 9px 2px 19px;
  border-bottom: 1px solid #000;
  background: #363738;
}
.nav { display: flex; gap: 18px; margin-left: 25px; }
.nav path { fill: none; stroke: #606162; stroke-width: 1.6; }
.show-all { margin: 0 14px 0 20px; }
.toolbar h2 { font-size: 15px; font-weight: 600; line-height: 18px; color: #ececec; }
.search {
  display: flex;
  align-items: center;
  gap: 6px;
  width: 167px;
  height: 34px;
  margin-left: auto;
  padding-left: 9px;
  border: 4px solid #176fa1;
  border-radius: 9px;
}
.search input {
  flex: 1;
  min-width: 0;
  padding: 2px 0 0;
  border: 0;
  outline: 0;
  background: none;
  color: #dedfdf;
  font: inherit;
  font-size: 12px;
}
.search input::placeholder { color: #6f7071; opacity: 1; }

.account {
  display: flex;
  align-items: center;
  gap: 8px;
  padding: 22px 19px 24px 24px;
  background: #202122;
}
.account-text { flex: 1; padding-bottom: 4px; }
.account h3 { font-size: 13px; line-height: 18px; }
.account p { font-size: 11px; line-height: 18px; }
.sign-in {
  width: 62px;
  height: 20px;
  border-radius: 5px;
  background: #575958;
  font-weight: 500;
  line-height: 20px;
}

.group {
  display: grid;
  grid-template-columns: repeat(8, 1fr);
  row-gap: 17px;
  padding: 18px 6px 9px 4px;
  border-top: 1px solid #3a3b3d;
}
.group-hardware { padding-top: 27px; padding-bottom: 19px; background: #202122; }
.group-other { padding-top: 17px; padding-bottom: 18px; }
.pref {
  position: relative;
  display: flex;
  flex-direction: column;
  align-items: center;
  gap: 6px;
  color: #a7a8a8;
  font-size: 12px;
  line-height: 14px;
  white-space: nowrap;
}
.pref svg { margin-left: 2px; }
.pref > span { min-height: 28px; }
.pref-marked::after {
  content: "";
  position: absolute;
  inset: -16px -1px -10px 4px;
  border: 5px solid #ee1c25;
}
.cal-month, .cal-day { text-anchor: middle; }
.cal-month { font-size: 5px; font-weight: 700; fill: #fff; }
.cal-day { font-size: 10px; font-weight: 500; fill: #222; }

.agent-footer {
  position: relative;
  margin-top: 10px;
  color: #50535b;
  font-size: 16px;
  line-height: 20px;
  text-align: center;
}
.copyright { color: #70727a; }

/* Dock */
.dock {
  position: relative;
  display: flex;
  align-items: center;
  gap: 13px;
  margin: 2px auto 6px;
  padding: 7px 7px 13px;
  border: 1px solid #3a5364;
  border-radius: 24px;
  background: linear-gradient(90deg, #1a2c40, #182747 12%, #172d48 30%, #1b3549 40%, #172c47 60%, #172c3f 72%, #17364a 85%, #153a4c);
}
.app { position: relative; }
.app svg { overflow: visible; }
.app-lattice { color: #2c80ff; }
.running::after {
  content: "";
  position: absolute;
  left: 50%;
  bottom: -13px;
  width: 4px;
  height: 4px;
  margin-left: -2px;
  border-radius: 50%;
  background: #9fb2c6;
}
.divider { width: 1px; height: 64px; margin: 0 10px 0 9px; background: #4b667a; }
```
